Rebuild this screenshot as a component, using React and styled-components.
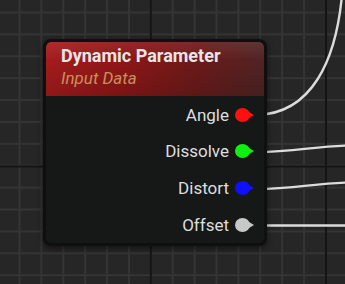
import React from "react";
import styled, { createGlobalStyle } from "styled-components";

const Global = createGlobalStyle`
  html, body { margin: 0; padding: 0; background: #262626; }
  body { font-family: Roboto, "Noto Sans", "Liberation Sans", sans-serif; }
`;

const Canvas = styled.div`
  position: relative;
  width: 345px;
  height: 284px;
  overflow: hidden;
  background-color: #262626;
  background-image:
    linear-gradient(to right, #141414 0 2px, transparent 2px),
    linear-gradient(to bottom, #141414 0 2px, transparent 2px),
    linear-gradient(to right, #343434 0 1.5px, transparent 1.5px),
    linear-gradient(to bottom, #343434 0 1.5px, transparent 1.5px);
  background-size: 175.2px 175.2px, 175.2px 175.2px, 21.9px 21.9px, 21.9px 21.9px;
  background-position: 325px 0, 0 165.5px, 18.5px 0, 0 11.5px;
`;

const Wires = styled.svg`
  position: absolute;
  inset: 0;
  width: 345px;
  height: 284px;
`;

const Node = styled.div`
  position: absolute;
  left: 43px;
  top: 39px;
  width: 224px;
  height: 207px;
  box-sizing: border-box;
  border: 3px solid #0f0f0f;
  border-radius: 8px;
  background: #161818;
  box-shadow: 0 2px 6px rgba(0, 0, 0, 0.55);
  display: flex;
  flex-direction: column;
  overflow: hidden;
`;

const Header = styled.div`
  height: 55px;
  box-sizing: border-box;
  padding: 3px 0 0 15px;
  border-radius: 5px 5px 0 0;
  background:
    linear-gradient(to bottom, rgba(255, 255, 255, 0.08) 0%, rgba(255, 255, 255, 0) 35%, rgba(0, 0, 0, 0.12) 100%),
    linear-gradient(100deg, #a51c1c 0%, #8e1616 35%, #6a1a1a 70%, #4e2424 100%);
  display: flex;
  flex-direction: column;
`;

const Title = styled.div`
  color: #e6e6e6;
  font-weight: 700;
  font-size: 18px;
  line-height: 22px;
`;

const Subtitle = styled.div`
  color: #c9905e;
  font-style: italic;
  font-size: 17px;
  line-height: 20px;
  margin-top: 1px;
`;

const Pins = styled.div`
  display: flex;
  flex-direction: column;
  padding-top: 0px;
`;

const Row = styled.div`
  height: 36.7px;
  display: flex;
  align-items: center;
  justify-content: flex-end;
  padding-right: 8px;
`;

const Label = styled.span`
  color: #dedede;
  font-size: 17px;
  margin-right: 6px;
`;

const Pin = styled.span`
  position: relative;
  width: 15px;
  height: 14px;
  border-radius: 50%;
  background: ${(p) => p.$color};
  margin-right: 6px;
  &::after {
    content: "";
    position: absolute;
    left: 14px;
    top: 4px;
    border-left: 5px solid ${(p) => p.$color};
    border-top: 3px solid transparent;
    border-bottom: 3px solid transparent;
  }
`;

const pins = [
  { name: "Angle", color: "#ff1010" },
  { name: "Dissolve", color: "#10f010" },
  { name: "Distort", color: "#1010ff" },
  { name: "Offset", color: "#c8c8c8" },
];

export default function App() {
  return (
    <>
      <Global />
      <Canvas>
        <Wires viewBox="0 0 345 284">
          <g fill="none" stroke="#dcdcdc" strokeWidth="2.4" strokeLinecap="round">
            <path d="M256 115 C 312 114, 336 60, 342 -5" />
            <path d="M256 152 C 295 152, 315 146, 350 145.5" />
            <path d="M256 189 C 295 189, 315 183, 350 182.5" />
            <path d="M256 225.5 L 350 225.5" />
          </g>
        </Wires>
        <Node>
          <Header>
            <Title>Dynamic Parameter</Title>
            <Subtitle>Input Data</Subtitle>
          </Header>
          <Pins>
            {pins.map((p) => (
              <Row key={p.name}>
                <Label>{p.name}</Label>
                <Pin $color={p.color} />
              </Row>
            ))}
          </Pins>
        </Node>
      </Canvas>
    </>
  );
}
